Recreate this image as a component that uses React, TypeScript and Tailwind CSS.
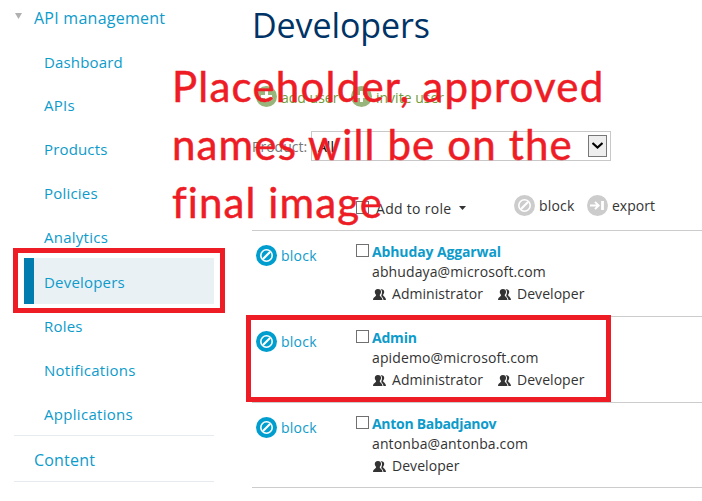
import React from "react";

const menu = [
  { label: "Dashboard", cls: "h-11 tracking-[0.15px]" },
  { label: "APIs", cls: "h-[43px] pb-0.5 tracking-[0.3px]" },
  { label: "Products", cls: "h-11 tracking-[0.15px]" },
  { label: "Policies", cls: "h-11 tracking-[0.2px]" },
  { label: "Analytics", cls: "h-[43px] tracking-[0.25px]" },
  { label: "Developers", cls: "h-[46px] pt-0.5 tracking-[0.2px]", active: true },
  { label: "Roles", cls: "h-11 tracking-[0.2px]" },
  { label: "Notifications", cls: "h-11 tracking-[0.25px]" },
  { label: "Applications", cls: "h-[43px] tracking-[0.3px]" },
];

const users = [
  { name: "Abhuday Aggarwal", track: "tracking-[-0.12px]", email: "abhudaya@microsoft.com", roles: ["Administrator", "Developer"], h: "h-[86px]" },
  { name: "Admin", track: "tracking-[-0.2px]", email: "apidemo@microsoft.com", roles: ["Administrator", "Developer"], h: "h-[86px]" },
  { name: "Anton Babadjanov", track: "tracking-[-0.3px]", email: "antonba@antonba.com", roles: ["Developer"], h: "h-[85px]" },
];

function BlockIcon({ className }: { className: string }) {
  return (
    <svg viewBox="0 0 21 21" className={`h-[21px] w-[21px] shrink-0 ${className}`}>
      <circle cx="10.5" cy="10.5" r="10.5" fill="currentColor" />
      <circle cx="10.5" cy="10.5" r="5.7" fill="none" stroke="#fff" strokeWidth="1.6" />
      <path d="M7 14L14 7" stroke="#fff" strokeWidth="2.2" />
    </svg>
  );
}

function PlusIcon() {
  return (
    <svg viewBox="0 0 21 21" className="h-[21px] w-[21px] shrink-0 text-[#98b67c]">
      <circle cx="10.5" cy="10.5" r="10.5" fill="currentColor" />
      <path d="M5 10.5h11M10.5 5v11" stroke="#fff" strokeWidth="3" />
    </svg>
  );
}

function ExportIcon() {
  return (
    <svg viewBox="0 0 21 21" className="h-[21px] w-[21px] shrink-0 text-[#cccccc]">
      <circle cx="10.5" cy="10.5" r="10.5" fill="currentColor" />
      <path d="M3 10.5h8M8 6.9l3.6 3.6L8 14.1" fill="none" stroke="#fff" strokeWidth="2" />
      <path d="M15.5 6v9" stroke="#fff" strokeWidth="2.8" />
    </svg>
  );
}

function PeopleIcon() {
  return (
    <svg viewBox="0 0 13 11" className="h-[11px] w-[13px] shrink-0" fill="#333">
      <path d="M7.4 0.3C9.6-0.3 11.3 0.9 11.2 2.9C11.1 4.4 10.4 5 10.1 5.8C10 7.3 12.8 7.6 13 11H10.5C10.2 8.8 9.2 8.1 8.4 7.2C8 6.6 8.9 5.5 9 3.2C9 1.8 8.4 0.8 7.4 0.3Z" />
      <path d="M4.9 0C7.2 0 8.3 1.3 8 3.3C7.9 4.7 7.1 5.3 6.7 6C6.6 7.9 9.3 7.6 9.5 11H0C0.2 7.6 3.2 7.9 3.1 6C2.7 5.3 1.9 4.7 1.8 3.3C1.7 1.3 2.7 0 4.9 0Z" />
    </svg>
  );
}

function Checkbox() {
  return <span className="block h-[13px] w-[13px] shrink-0 border border-[#707070] bg-white" />;
}

function Sidebar() {
  return (
    <nav className="ml-3.5 w-[200px] shrink-0 text-[15px] text-[#0d9bcb]">
      <div className="flex h-10 items-start pl-px">
        <svg viewBox="0 0 7 6" className="mt-[13px] h-1.5 w-[7px]">
          <path d="M0 0h7L3.5 6z" fill="#b0b0b0" />
        </svg>
        <span className="ml-3 mt-1.5 text-base leading-6 tracking-[0.25px]">API management</span>
      </div>
      <ul>
        {menu.map((m) => (
          <li
            key={m.label}
            className={`flex items-center whitespace-nowrap ${m.cls} ${
              m.active ? "ml-2.5 border-l-10 border-[#007dae] bg-[#e9f1f5] pl-2.5" : "pl-[30px]"
            }`}
          >
            <span className="mt-px pt-px">{m.label}</span>
          </li>
        ))}
      </ul>
      <div className="flex h-[47px] items-center border-y border-[#e6ebef] pl-5 pt-0.5 text-base tracking-[0.2px]">
        Content
      </div>
    </nav>
  );
}

export default function App() {
  return (
    <div className="relative flex h-[501px] w-[702px] overflow-hidden bg-white font-['Open_Sans',sans-serif] text-sm text-[#333]">
      <Sidebar />
      <main className="ml-[38px] min-w-0 flex-1">
        <h1 className="h-[50px] text-[34px] leading-[50px] tracking-[-0.1px] text-[#003366]">Developers</h1>

        <div className="mt-9 flex h-[21px] items-center pl-1 text-[#6f9b3a]">
          <PlusIcon />
          <span className="ml-1 w-[70px] pt-0.5">add user</span>
          <PlusIcon />
          <span className="ml-1 pt-0.5">invite user</span>
        </div>

        <div className="mt-6 flex h-[30px] items-center">
          <span className="w-[59px] pt-0.5 text-[#777]">Product:</span>
          <div className="flex h-[30px] w-[300px] items-center justify-between border border-[#c8c8c8] pl-1.5 pr-[3px] text-black">
            <span className="pt-0.5">All</span>
            <span className="mb-px flex h-[22px] w-[19px] items-center justify-center border border-[#777] bg-[#eee]">
              <svg viewBox="0 0 11 7" className="h-[7px] w-[11px]">
                <path d="M0.5 1L5.5 5.5L10.5 1" fill="none" stroke="#000" strokeWidth="2.2" />
              </svg>
            </span>
          </div>
        </div>

        <div className="flex h-[70px] items-start border-b border-[#ccc] pl-[104px]">
          <div className="mt-10">
            <Checkbox />
          </div>
          <span className="ml-[7px] mt-[38px] w-[83px] leading-5 tracking-[0.3px]">Add to role</span>
          <svg viewBox="0 0 7 4" className="mt-[45px] h-1 w-[7px]">
            <path d="M0 0h7L3.5 4z" fill="#333" />
          </svg>
          <div className="ml-[48px] mt-[34px] flex h-[21px] items-center">
            <BlockIcon className="text-[#cccccc]" />
            <span className="ml-1 w-[48px] tracking-[0.2px]">block</span>
            <ExportIcon />
            <span className="ml-1">export</span>
          </div>
        </div>

        {users.map((u) => (
          <section key={u.name} className={`flex items-start border-b border-[#ccc] pl-1 ${u.h}`}>
            <div className="mt-3.5 flex h-[21px] w-[100px] items-center text-[#0d9bcb]">
              <BlockIcon className="text-[#009dcf]" />
              <span className="ml-1 tracking-[0.25px]">block</span>
            </div>
            <div className="mt-[13px]">
              <Checkbox />
            </div>
            <div className="ml-[3px] mt-[11px] whitespace-nowrap">
              <div className={`h-5 font-bold leading-5 text-[#0d9bcb] ${u.track}`}>{u.name}</div>
              <div className="h-5 leading-5 tracking-[0.12px]">{u.email}</div>
              <div className="mt-0.5 flex h-5 items-center pl-px">
                {u.roles.map((r) => (
                  <span key={r} className="mr-[15px] flex items-center leading-5">
                    <PeopleIcon />
                    <span className="ml-1.5 tracking-[0.05px]">{r}</span>
                  </span>
                ))}
              </div>
            </div>
          </section>
        ))}
      </main>

      <div className="absolute left-[13px] top-[248px] h-[65px] w-[212px] border-5 border-[#ee1c25]" />
      <div className="absolute left-[246px] top-[315px] h-[87px] w-[365px] border-5 border-[#ee1c25]" />
      <div className="absolute left-[172px] top-[57px] whitespace-nowrap font-['Lato',sans-serif] text-[42px] leading-[58px] text-[#ee1c25] [-webkit-text-stroke:0.5px_#ee1c25] [font-variant-ligatures:none]">
        <div className="tracking-[1.22px]">Placeholder, approved</div>
        <div className="tracking-[1.15px]">names will be on the</div>
        <div className="tracking-[1.1px]">final image</div>
      </div>
    </div>
  );
}
